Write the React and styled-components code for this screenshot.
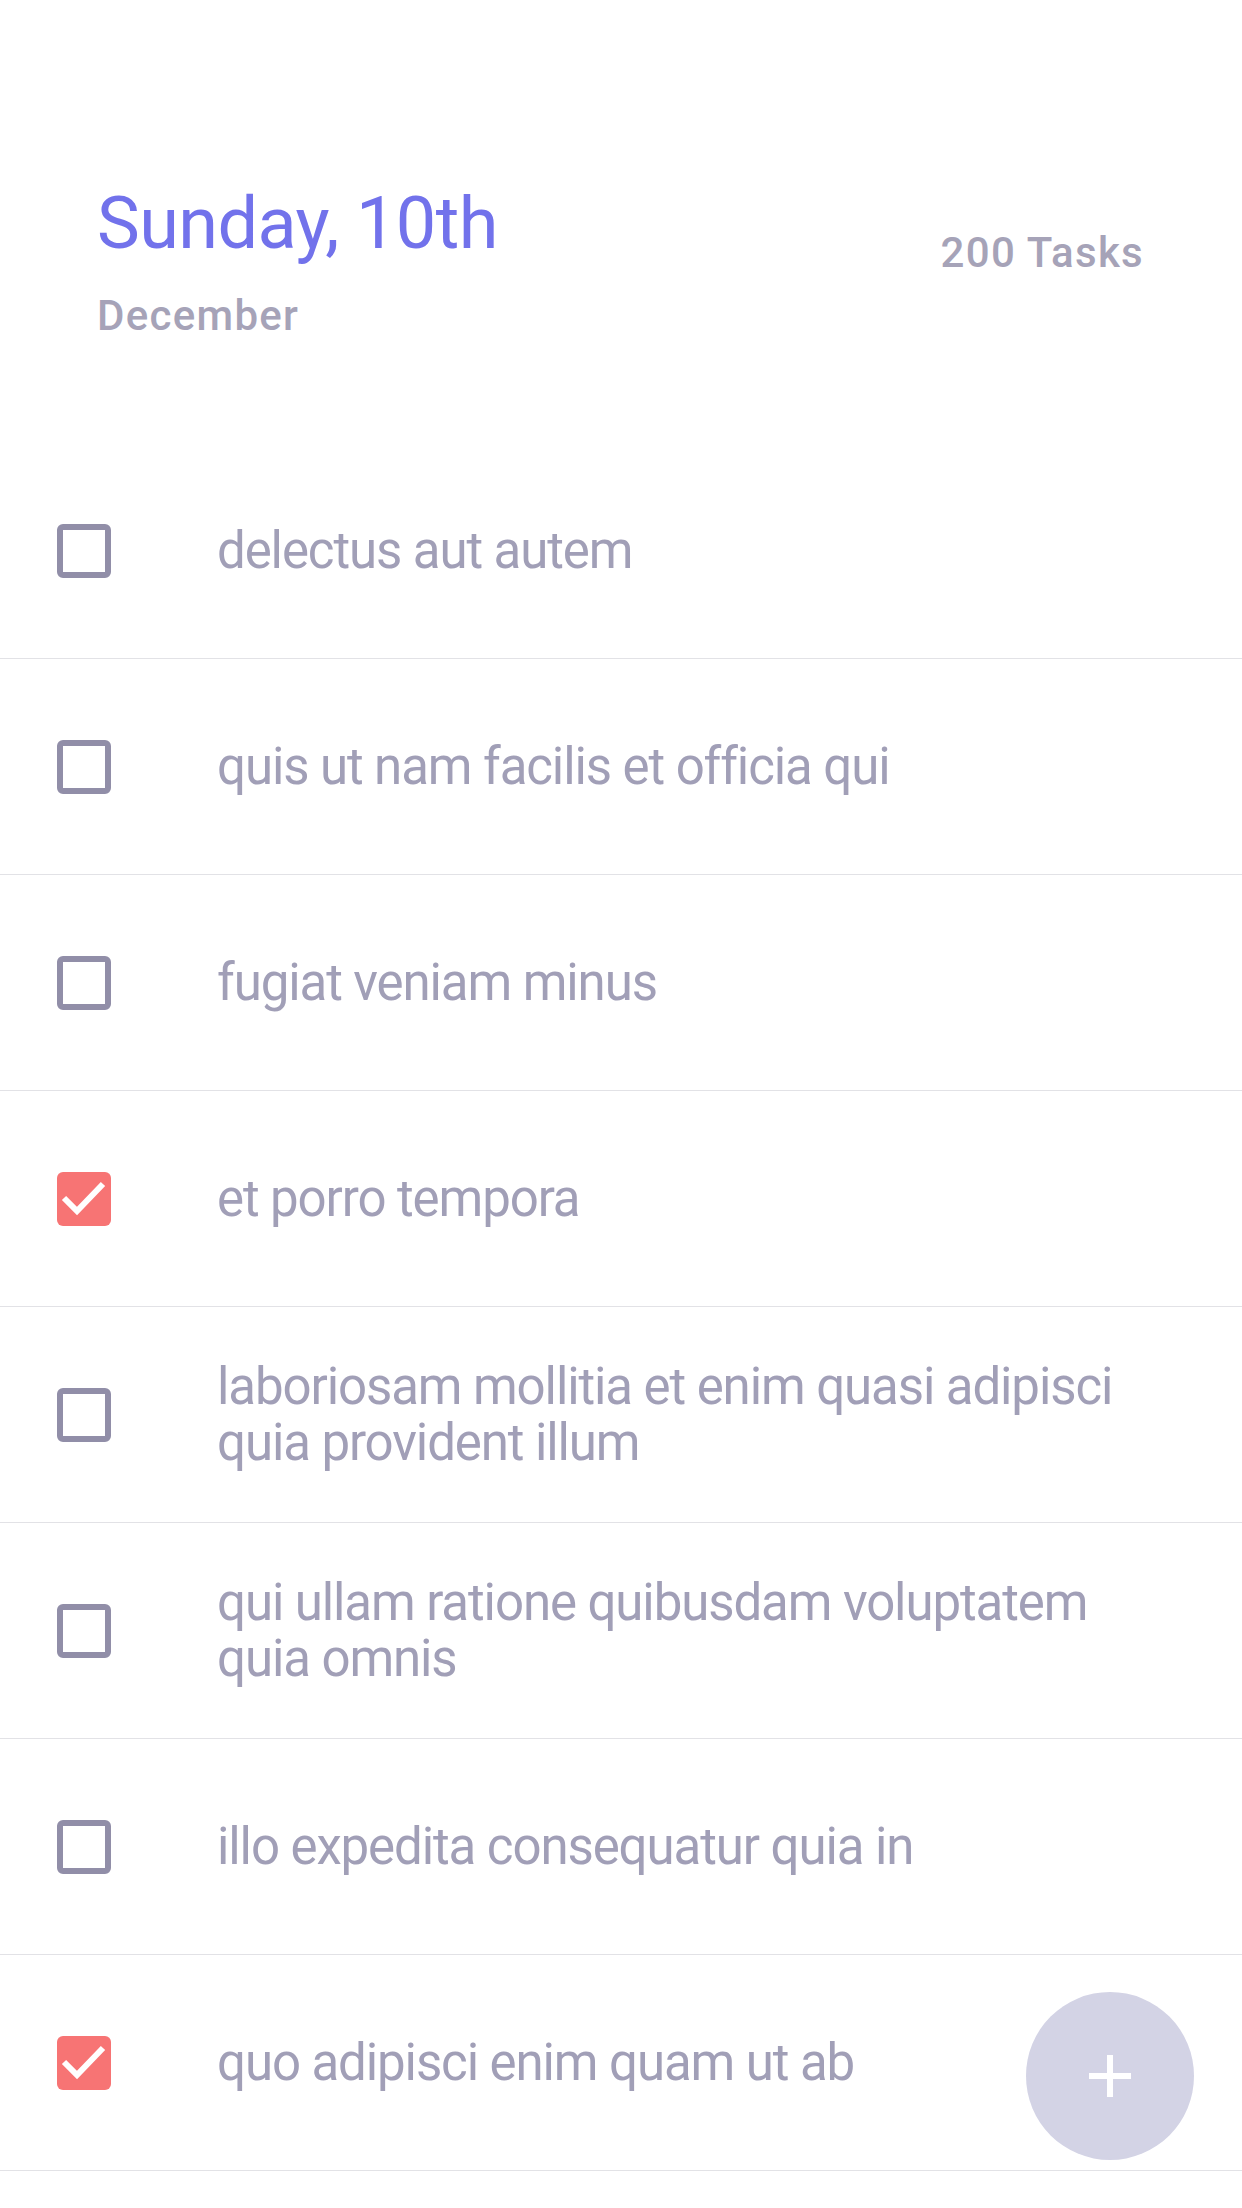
import React from 'react';
import styled, { createGlobalStyle } from 'styled-components';

const GlobalStyle = createGlobalStyle`
    html, body {
        margin: 0;
        padding: 0;
        background: #ffffff;
        overflow: hidden;
    }
    body {
        font-family: Roboto, "Liberation Sans", Arial, sans-serif;
        -webkit-font-smoothing: antialiased;
    }
`;

const todos = [
    { id: 1, title: 'delectus aut autem', completed: false },
    { id: 2, title: 'quis ut nam facilis et officia qui', completed: false },
    { id: 3, title: 'fugiat veniam minus', completed: false },
    { id: 4, title: 'et porro tempora', completed: true },
    { id: 5, title: 'laboriosam mollitia et enim quasi adipisci quia provident illum', completed: false },
    { id: 6, title: 'qui ullam ratione quibusdam voluptatem quia omnis', completed: false },
    { id: 7, title: 'illo expedita consequatur quia in', completed: false },
    { id: 8, title: 'quo adipisci enim quam ut ab', completed: true },
];

const Screen = styled.div`
    width: 1242px;
    height: 2208px;
    overflow: hidden;
    background: #ffffff;
`;

const Header = styled.header`
    display: flex;
    justify-content: space-between;
    align-items: flex-start;
    padding: 182px 98px 102px 97px;
`;

const Title = styled.h1`
    margin: 0;
    font-size: 72px;
    line-height: 84px;
    font-weight: 400;
    letter-spacing: -0.6px;
    color: #7272eb;
`;

const Caption = styled.div`
    margin-top: ${p => p.offset}px;
    font-size: 42px;
    line-height: 50px;
    font-weight: 500;
    letter-spacing: 1.3px;
    color: #a6a3b8;
`;

const List = styled.ul`
    list-style: none;
    margin: 0;
    padding: 0;
`;

const Row = styled.li`
    display: flex;
    align-items: center;
    height: 215px;
    padding: 0 90px 0 57px;
    border-bottom: 1px solid #e2e2e6;
`;

const Box = styled.span`
    flex: none;
    box-sizing: border-box;
    width: 54px;
    height: 54px;
    border-radius: 6px;
    border: ${p => (p.checked ? 'none' : '6px solid #918ea8')};
    background: ${p => (p.checked ? '#f77474' : 'transparent')};
    display: flex;
`;

const Label = styled.span`
    margin-left: 106px;
    flex: 1;
    font-size: 51px;
    line-height: 56px;
    letter-spacing: -1.1px;
    color: #a19fb7;
`;

const Fab = styled.button`
    position: fixed;
    right: 48px;
    bottom: 48px;
    width: 168px;
    height: 168px;
    border: none;
    border-radius: 50%;
    background: #d3d3e5;
    padding: 0;
    display: flex;
    align-items: center;
    justify-content: center;
`;

function Check() {
    return (
        <svg width="54" height="54" viewBox="0 0 54 54">
            <path d="M7 26 L20 39 L46 12" fill="none" stroke="#ffffff" strokeWidth="6" />
        </svg>
    );
}

export default function App() {
    return (
        <Screen>
            <GlobalStyle />
            <Header>
                <div>
                    <Title>Sunday, 10th</Title>
                    <Caption offset={25}>December</Caption>
                </div>
                <Caption offset={46}>200 Tasks</Caption>
            </Header>
            <List>
                {todos.map(todo => (
                    <Row key={todo.id}>
                        <Box checked={todo.completed}>{todo.completed && <Check />}</Box>
                        <Label>{todo.title}</Label>
                    </Row>
                ))}
            </List>
            <Fab aria-label="add">
                <svg width="42" height="42" viewBox="0 0 42 42">
                    <path d="M21 0 V42 M0 21 H42" stroke="#ffffff" strokeWidth="6" />
                </svg>
            </Fab>
        </Screen>
    );
}
